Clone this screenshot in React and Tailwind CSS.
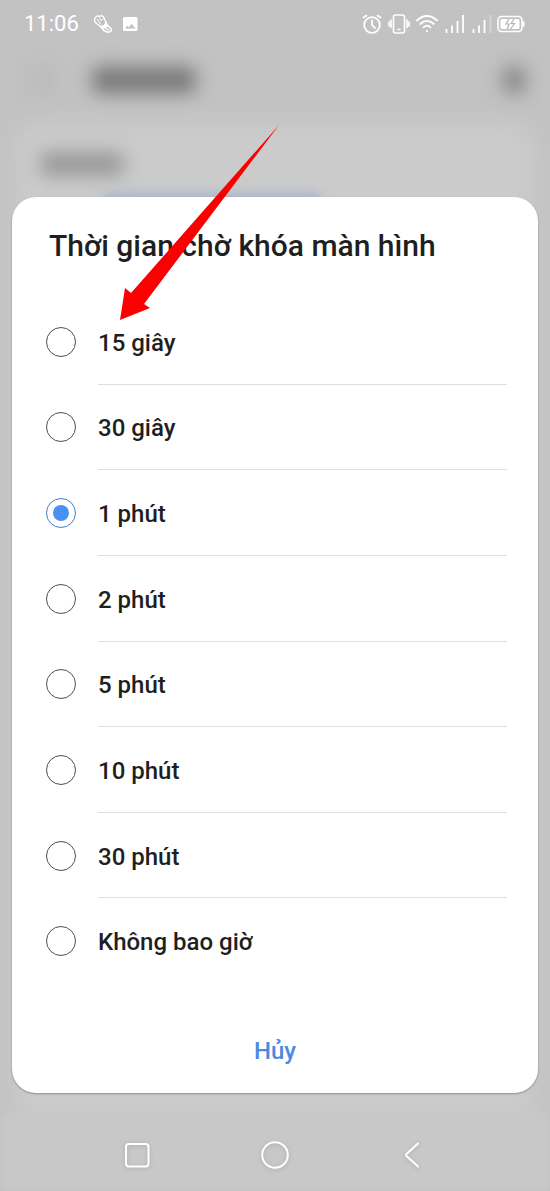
import { useState } from 'react'

const opciones = [
  '15 giây',
  '30 giây',
  '1 phút',
  '2 phút',
  '5 phút',
  '10 phút',
  '30 phút',
  'Không bao giờ'
]

function StatusBar() {
  return (
    <header className="flex h-12 items-center justify-between pl-6 pr-[25px] text-white">
      <div className="flex items-center">
        <span className="text-[22px] leading-[22px]">11:06</span>
        <svg className="ml-3.5 h-5 w-5" viewBox="0 0 20 20" fill="none" stroke="currentColor" strokeLinecap="round" strokeLinejoin="round">
          <path strokeWidth="1.4" d="M3.500 9.500C1.500 7.500 1 5 2.500 3.500 3 2 5 1.500 6.500 2.500 8.500 1 10.500 2 11 4L13.500 9.500 9 13.500z" />
          <path strokeWidth="1" d="M4.500 5.500l3 4.500M6.500 4l1.500 2.500 2-1" />
          <path fill="currentColor" strokeWidth="1" d="M13 8l2 4-3 1-3.500 1L7 12.500l4-1z" />
          <path strokeWidth="1.600" d="M9 14c2 .5 4-.5 5.500-2.500 1.500 1.500 4 2.500 4 4.500-.3 2.500-3.500 2.500-5.500 1.500-2-.8-3.500-2-4-3.500z" />
          <path strokeWidth="1.200" d="M13 14.500l3 1.500" />
        </svg>
        <svg className="ml-[9px] h-4 w-4" viewBox="0 0 16 16">
          <rect x="1" y="1" width="14.500" height="14" rx="1.500" fill="currentColor" />
          <path d="M3 12.500l2.500-3 1.500 1.800 2.500-3.500 4 4.700z" fill="#c2c2c2" />
        </svg>
      </div>

      <div className="flex items-center">
        <svg className="h-5 w-5" viewBox="0 0 20 20" fill="none" stroke="currentColor" strokeWidth="1.800" strokeLinecap="round">
          <circle cx="10" cy="11" r="7.800" />
          <path d="M10 6.500V11l3 3M1.500 3.500L4.500 1.500M18.500 3.500l-3-2" />
        </svg>
        <svg className="ml-1.5 h-5 w-[22px]" viewBox="0 0 22 20" fill="none" stroke="currentColor" strokeWidth="1.600" strokeLinecap="round">
          <rect x="5.500" y="1" width="11" height="18" rx="2" />
          <path d="M10 15.500h2M3 6v7.500M1 8l-.3 1.200.6 1.300-.5 1.500M19 6v7.500M21 8l.3 1.200-.6 1.300.5 1.500" />
        </svg>
        <svg className="ml-1.5 h-5 w-[22px]" viewBox="0 0 22 20" fill="none" stroke="currentColor" strokeWidth="1.800" strokeLinecap="round">
          <path d="M1 6.500c6-6 14-6 20 0M4.200 10c4.200-4 9.400-4 13.600 0M7.500 13.300c2.200-2 4.800-2 7 0" />
          <circle cx="11" cy="17" r="1.100" fill="currentColor" stroke="none" />
        </svg>
        <svg className="ml-[7px] h-5 w-5" viewBox="0 0 20 20" stroke="currentColor" strokeWidth="1.800">
          <path d="M1.500 15v4M7 11.500V19M12.500 7v12M18 1v18" />
        </svg>
        <svg className="ml-[7px] h-5 w-5" viewBox="0 0 20 20" stroke="currentColor" strokeWidth="1.800">
          <path d="M1.500 15v4M7 11.500V19M12.500 6v13" />
          <path d="M18.500 1v18" opacity=".35" />
        </svg>
        <svg className="ml-[5px] h-5 w-7" viewBox="0 0 28 20">
          <rect x="1" y="2.500" width="24" height="15" rx="3.500" fill="none" stroke="currentColor" strokeWidth="1.600" />
          <rect x="3.500" y="5" width="19" height="10" rx="1.500" fill="currentColor" />
          <path d="M25.500 7.500H27.500V12.500H25.500z" fill="currentColor" />
          <path d="M12 5L9 10h3l-1.500 5M17 5L14.200 9.500H17.500L13.500 15" fill="none" stroke="#b4b4b4" strokeWidth="1.200" />
        </svg>
      </div>
    </header>
  )
}

// settings page behind the dialog, dimmed and out of focus
function Backdrop() {
  return (
    <div aria-hidden="true" className="absolute inset-0 -z-10 flex flex-col overflow-hidden bg-[#c2c2c2]">
      <div className="flex items-center pl-8 pr-6 pt-[66px]">
        <div className="h-6 w-5 bg-[#b8b8b8] blur-[10px]" />
        <div className="ml-10 h-7 w-[104px] rounded-lg bg-[#7c7c7c] blur-[9px]" />
        <div className="ml-auto h-7 w-6 rounded-lg bg-[#8c8c8c] blur-[9px]" />
      </div>
      <div className="relative mt-7 flex-1">
        <div className="absolute inset-x-3.5 bottom-16 top-0 rounded-3xl bg-[#cbcbcb] blur-[12px]" />
        <div className="relative pl-10 pt-[30px]">
          <div className="h-6 w-[84px] rounded-lg bg-[#999999] blur-[9px]" />
          <div className="ml-16 mt-[18px] h-5 w-[216px] bg-[#a3b3ca] blur-[6px]" />
        </div>
      </div>
      <div className="absolute inset-x-0 bottom-0 h-20 bg-[#c8c8c8] blur-[6px]" />
    </div>
  )
}

function NavBar() {
  return (
    <nav className="flex h-[98px] items-center justify-center gap-[108px] pt-[26px] text-white">
      <button type="button" aria-label="Recents">
        <svg className="h-[30px] w-[30px] drop-shadow-sm" viewBox="0 0 30 30" fill="none" stroke="currentColor" strokeWidth="2">
          <rect x="4" y="4" width="22.500" height="22.500" rx="3" />
        </svg>
      </button>
      <button type="button" aria-label="Home">
        <svg className="h-[30px] w-[30px] drop-shadow-sm" viewBox="0 0 30 30" fill="none" stroke="currentColor" strokeWidth="2">
          <circle cx="15" cy="15" r="12.800" />
        </svg>
      </button>
      <button type="button" aria-label="Back">
        <svg className="h-[30px] w-[30px] drop-shadow-sm" viewBox="0 0 30 30" fill="none" stroke="currentColor" strokeWidth="2" strokeLinecap="round">
          <path d="M20 3.500L8.500 14Q7.500 15 8.500 16L20 26.500" />
        </svg>
      </button>
    </nav>
  )
}

export default function App() {
  const [seleccion, setSeleccion] = useState('1 phút')

  return (
    <div className="relative isolate flex min-h-screen flex-col font-['Roboto',sans-serif] text-[#1f1f1f]">
      <Backdrop />
      <StatusBar />

      <main
        role="dialog"
        aria-labelledby="titulo"
        className="mx-3 mt-[149px] flex flex-1 flex-col rounded-[24px] bg-white shadow-[0_1px_2px_rgba(0,0,0,0.3)]"
      >
        <h1 id="titulo" className="pb-9 pl-[37px] pt-8 text-[30px] font-medium leading-[34px]">
          Thời gian chờ khóa màn hình
        </h1>

        <div role="radiogroup" aria-labelledby="titulo" className="flex flex-1 flex-col">
          {opciones.map((opcion) => (
            <label key={opcion} className="group flex flex-1 cursor-pointer items-center pl-[34px] pr-[31px]">
              <input
                type="radio"
                name="tiempo"
                checked={seleccion === opcion}
                onChange={() => setSeleccion(opcion)}
                className="grid h-[30px] w-[30px] appearance-none place-items-center rounded-full border border-[#4f4f4f] before:h-4 before:w-4 before:rounded-full checked:border-[#3f7fd8] checked:before:bg-[#4a90f0]"
              />
              <span className="ml-[22px] flex flex-1 items-center self-stretch border-b border-[#dedede] pt-[3px] text-2xl font-medium group-last:border-b-0">
                {opcion}
              </span>
            </label>
          ))}
        </div>

        <div className="flex justify-center pb-[26px] pt-[52px]">
          <button type="button" className="px-6 text-2xl font-medium text-[#4a8be0]">
            Hủy
          </button>
        </div>
      </main>

      <NavBar />

      {/* pointer to the first option */}
      <svg className="pointer-events-none absolute left-[120px] top-[125px] h-[196px] w-40" viewBox="0 0 160 196" aria-hidden="true">
        <path d="M159 0L11 168 5 163 0 195 30 183 24 179z" fill="#fb0000" />
      </svg>
    </div>
  )
}
